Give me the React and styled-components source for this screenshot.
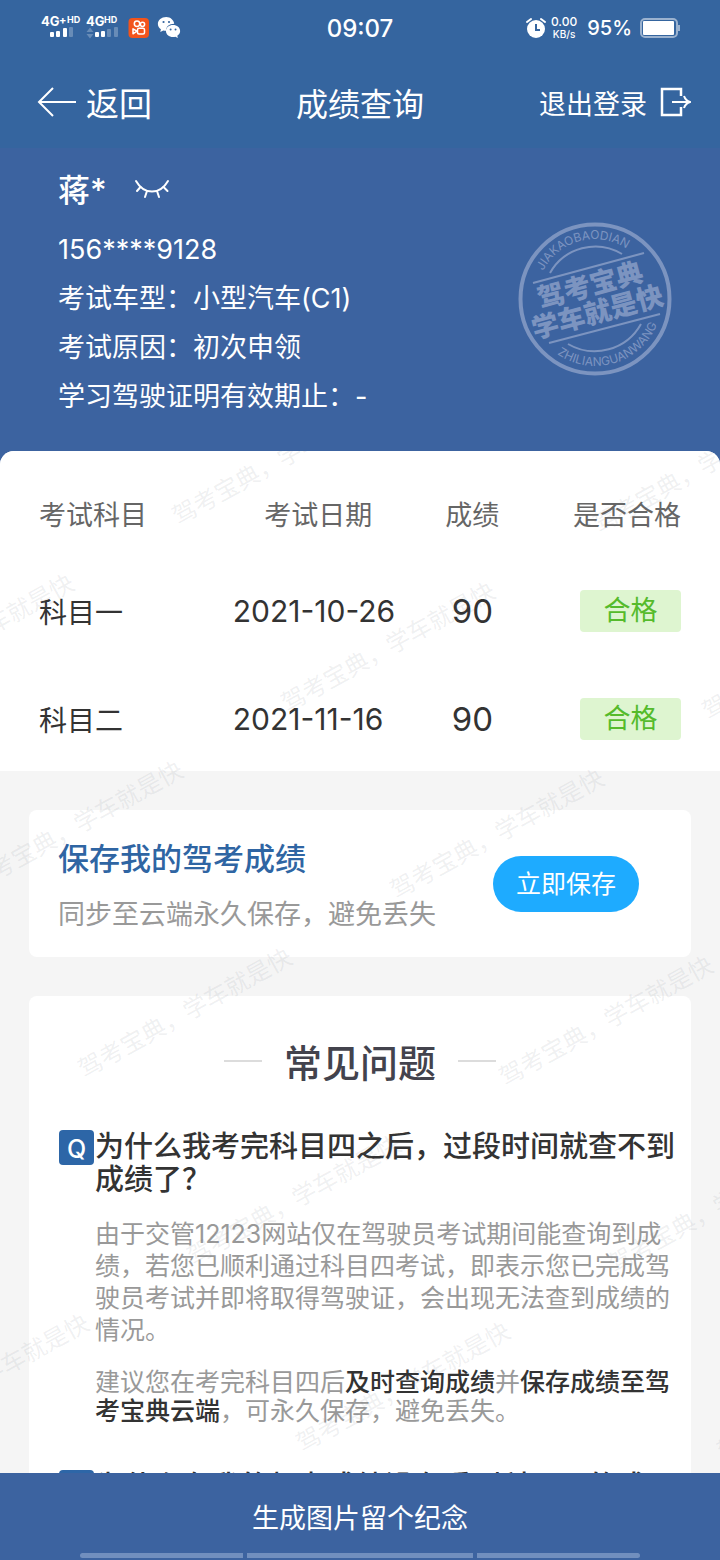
import React from "react";
import styled, { createGlobalStyle, css } from "styled-components";

const GlobalStyle = createGlobalStyle`
  * {
    box-sizing: border-box;
  }
  body {
    margin: 0;
    font-family: Inter, "Noto Sans CJK SC", sans-serif;
    font-size: 27px;
    color: #333;
  }
  button {
    font: inherit;
    border: 0;
    padding: 0;
    background: none;
    color: inherit;
    cursor: pointer;
  }
  h1, h2, h3, p {
    margin: 0;
  }
`;

const Page = styled.div`
  height: 100vh;
  display: flex;
  flex-direction: column;
  background: #f5f5f5;
`;

const Top = styled.header`
  background: #35659f;
  color: #fff;
`;

const StatusBar = styled.div`
  height: 56px;
  padding: 0 40px;
  display: grid;
  grid-template-columns: 1fr auto 1fr;
  align-items: center;
`;

const StatusGroup = styled.div`
  display: flex;
  align-items: center;
  justify-content: ${(props) => (props.$end ? "flex-end" : "flex-start")};
`;

const Clock = styled.div`
  font-size: 24px;
  font-weight: 500;
`;

const Speed = styled.div`
  margin: 0 10px 0 5px;
  font-size: 12px;
  line-height: 12px;
  font-weight: 500;
  text-align: center;
  small {
    display: block;
    font-size: 10px;
  }
`;

const Percent = styled.div`
  margin-right: 8px;
  font-size: 20px;
  font-weight: 500;
`;

const NavBar = styled.nav`
  height: 92px;
  padding: 0 29px;
  display: grid;
  grid-template-columns: 1fr auto 1fr;
  align-items: center;
`;

const NavTitle = styled.h1`
  font-size: 32px;
  font-weight: 400;
`;

const NavButton = styled.button`
  display: flex;
  align-items: center;
  gap: ${(props) => (props.$end ? "12px" : "9px")};
  padding-left: 8px;
  justify-self: ${(props) => (props.$end ? "end" : "start")};
  font-size: ${(props) => (props.$end ? "27px" : "33px")};
`;

const Scroll = styled.main`
  flex: 1;
  min-height: 0;
  overflow-y: auto;
  scrollbar-width: none;
  background: #3c63a0;
`;

const Profile = styled.section`
  height: 303px;
  padding: 17px 48px 0 58px;
  display: flex;
  justify-content: space-between;
  color: #fff;
`;

const NameRow = styled.div`
  height: 60px;
  display: flex;
  align-items: flex-start;
  gap: 27px;
  h2 {
    font-size: 32px;
    line-height: 52px;
    font-weight: 500;
  }
  button {
    display: flex;
    padding-top: 13px;
  }
`;

const Info = styled.p`
  line-height: 49px;
`;

const Seal = styled.svg`
  margin-top: 57px;
  flex: none;
`;

const Content = styled.div`
  position: relative;
  overflow: hidden;
  border-radius: 14px 14px 0 0;
  background: #f5f5f5;
`;

const Scores = styled.section`
  padding: 9px 39px 0;
  height: 320px;
  background: #fff;
`;

const ScoreTable = styled.table`
  width: 100%;
  border-collapse: collapse;
  table-layout: fixed;
`;

const cell = css`
  padding: 0;
  font-weight: 400;
  text-align: ${(props) => props.$align || "left"};
`;

const Th = styled.th`
  ${cell}
  height: 97px;
  padding-top: 10px;
  color: #666;
  width: ${(props) => props.$width};
`;

const Td = styled.td`
  ${cell}
  height: 108px;
  font-size: 28px;
`;

const DateTd = styled(Td)`
  padding-left: 14px;
  font-size: 30px;
`;

const ScoreTd = styled(Td)`
  font-size: 33px;
`;

const Pass = styled.span`
  display: inline-block;
  width: 101px;
  border-radius: 4px;
  background: #def5d0;
  color: #55bb2b;
  font-size: 27px;
  line-height: 42px;
  text-align: center;
`;

const Card = styled.section`
  margin: 39px 29px 0;
  border-radius: 8px;
  background: #fff;
`;

const SaveCard = styled(Card)`
  height: 147px;
  padding: 0 52px 0 29px;
  display: flex;
  align-items: center;
  justify-content: space-between;
`;

const SaveText = styled.div`
  padding-top: 5px;
  h2 {
    font-size: 31px;
    line-height: 46px;
    font-weight: 500;
    color: #2f65a3;
  }
  p {
    margin-top: 12px;
    line-height: 42px;
    color: #999;
  }
`;

const SaveButton = styled.button`
  width: 146px;
  border-radius: 28px;
  background: #1eabff;
  color: #fff;
  font-size: 25px;
  line-height: 56px;
`;

const FaqCard = styled(Card)`
  padding: 38px 16px 60px 30px;
`;

const FaqTitle = styled.h2`
  margin-right: 14px;
  margin-bottom: 38px;
  display: flex;
  align-items: center;
  justify-content: center;
  gap: 22px;
  font-size: 38px;
  line-height: 58px;
  font-weight: 500;
  color: #43434d;
  &::before,
  &::after {
    content: "";
    width: 38px;
    height: 2px;
    margin-top: -5px;
    background: #dcdcdc;
  }
`;

const FaqItem = styled.article`
  display: grid;
  grid-template-columns: 36px 1fr;
  margin-bottom: 44px;
`;

const Badge = styled.span`
  width: 35px;
  height: 35px;
  border-radius: 4px;
  background: #2d66a7;
  color: #fff;
  font-size: 25px;
  line-height: 38px;
  font-weight: 500;
  text-align: center;
`;

const Question = styled.h3`
  font-size: 29px;
  line-height: 33px;
  font-weight: 500;
`;

const Answer = styled.p`
  grid-column: 2;
  margin-top: 22px;
  font-size: 25px;
  line-height: ${(props) => (props.$tight ? "29px" : "32px")};
  color: #999;
  strong {
    font-weight: 500;
    color: #333;
  }
`;

const WatermarkLayer = styled.svg`
  position: absolute;
  inset: 0;
  width: 100%;
  height: 100%;
  pointer-events: none;
  font-size: 24px;
  fill: rgba(100, 110, 120, 0.1);
`;

const Footer = styled.footer`
  height: 87px;
  display: flex;
  flex-direction: column;
  align-items: center;
  background: #3c63a0;
  color: #fff;
`;

const ShareButton = styled.button`
  width: 100%;
  padding-top: 12px;
  line-height: 68px;
`;

const GestureBar = styled.div`
  width: 560px;
  max-width: 80%;
  display: grid;
  grid-template-columns: 163fr 226fr 163fr;
  gap: 4px;
  span {
    height: 5px;
    background: #718fbe;
  }
  span:first-child {
    border-radius: 3px 0 0 3px;
  }
  span:last-child {
    border-radius: 0 3px 3px 0;
  }
`;

const SignalIcon = () => (
  <svg width="117" height="28" viewBox="0 0 117 28" fill="#fff">
    <g fontFamily="Inter" fontWeight="700">
      <text x="1" y="12" fontSize="13">4G</text>
      <text x="19" y="10" fontSize="11">+</text>
      <text x="27" y="9" fontSize="9">HD</text>
      <text x="46" y="12" fontSize="13">4G</text>
      <text x="64" y="9" fontSize="9">HD</text>
    </g>
    <rect x="10" y="18" width="4" height="5" rx="1" />
    <rect x="16" y="17" width="4" height="6" rx="1" />
    <rect x="23" y="14" width="4" height="9" rx="1" />
    <rect x="55" y="18" width="4" height="5" rx="1" />
    <rect x="61" y="17" width="4" height="6" rx="1" />
    <g opacity="0.25">
      <rect x="29" y="13" width="4" height="10" rx="1" />
      <rect x="67" y="15" width="4" height="8" rx="1" />
      <rect x="74" y="13" width="4" height="10" rx="1" />
      <path d="M46.500 18l3.500-4.500 3.500 4.500zM46.500 20l3.500 4.500 3.500-4.500z" />
    </g>
    <rect x="88.500" y="4" width="20.500" height="20" rx="4" fill="#f2541b" />
    <g fill="none" stroke="#fff" strokeWidth="1.500" strokeLinejoin="round">
      <circle cx="97" cy="9.800" r="2.700" />
      <circle cx="102.500" cy="10.300" r="2.100" />
      <rect x="97.500" y="14.300" width="7" height="5.800" rx="1.500" />
      <path d="M97 17.200l-4-2.400v5z" />
    </g>
  </svg>
);

const WechatIcon = () => (
  <svg width="24" height="24" viewBox="0 0 22 22">
    <path
      fill="#fff"
      d="M8.500 1C4.100 1 .8 3.700.8 7.300c0 2 1.100 3.700 2.800 4.900L3 14.700l2.800-1.400c.9.200 1.800.4 2.700.3C8 9.800 11 7.300 15.800 7.200 15.200 3.600 12.300 1 8.500 1z"
    />
    <path
      fill="#fff"
      d="M14.700 8.300c-3.700 0-6.500 2.400-6.500 5.500s2.800 5.500 6.500 5.500c.8 0 1.500-.1 2.200-.3l2.200 1.200-.5-2c1.600-1 2.600-2.600 2.600-4.400 0-3.100-2.900-5.500-6.500-5.500z"
    />
    <g fill="#35659f">
      <circle cx="6" cy="5.500" r="1" />
      <circle cx="11" cy="5.500" r="1" />
      <circle cx="12.500" cy="12.300" r="0.900" />
      <circle cx="17" cy="12.300" r="0.900" />
    </g>
  </svg>
);

const AlarmIcon = () => (
  <svg width="20" height="22" viewBox="0 0 20 22">
    <circle cx="10" cy="12" r="9" fill="#fff" />
    <path d="M1 5l4-3M19 5l-4-3" stroke="#fff" strokeWidth="2" strokeLinecap="round" />
    <path d="M10 7v6h4" fill="none" stroke="#35659f" strokeWidth="2" />
  </svg>
);

const BatteryIcon = () => (
  <svg width="40" height="20" viewBox="0 0 40 20">
    <rect x="1" y="1" width="36" height="18" rx="4" fill="none" stroke="#9bb2cf" strokeWidth="2" />
    <rect x="3" y="3" width="31" height="14" rx="1" fill="#fff" />
    <path d="M39 7v6" stroke="#9bb2cf" strokeWidth="2" />
  </svg>
);

const BackIcon = () => (
  <svg width="40" height="30" viewBox="0 0 40 30" fill="none" stroke="#fff" strokeWidth="2">
    <path d="M39 15H2M16 1L2 15l14 14" />
  </svg>
);

const LogoutIcon = () => (
  <svg width="32" height="30" viewBox="0 0 32 30" fill="none" stroke="#fff" strokeWidth="2.500">
    <path d="M22 9V2H3v26h19v-8" />
    <path d="M13 15h17M25 9c1 3 3 5 6 6-3 1-5 3-6 6" strokeWidth="2" />
  </svg>
);

const ClosedEyeIcon = () => (
  <svg width="36" height="22" viewBox="0 0 36 22" fill="none" stroke="#fff" strokeWidth="2" strokeLinecap="round">
    <path d="M2 3c4 7 9.500 10.500 16 10.500S30 10 34 3" />
    <path d="M6.500 9L3 13M13 13l-2 6M23 13l2 6M29.500 9l4 4" />
  </svg>
);

const SealMark = () => (
  <Seal width="154" height="154" viewBox="0 0 154 154" fill="none" stroke="#7c94c0">
    <defs>
      <path id="seal-top" d="M25 49A58 58 0 0 1 134 66" />
      <path id="seal-bottom" d="M39 132A67 67 0 0 0 144 81" />
    </defs>
    <circle cx="77" cy="77" r="74.500" strokeWidth="4" />
    <g strokeWidth="2">
      <path d="M32 51A52 52 0 0 1 104 32" />
      <path d="M50 122A53 53 0 0 0 123 102" />
      <path d="M15 61L126 31" />
      <path d="M31 121L142 92" />
    </g>
    <g fill="#7c94c0" stroke="none" fontSize="12">
      <text>
        <textPath href="#seal-top">JIAKAOBAODIAN</textPath>
      </text>
      <text>
        <textPath href="#seal-bottom">ZHILIANGUANWANG</textPath>
      </text>
    </g>
    <g
      fill="#7c94c0"
      stroke="none"
      fontWeight="900"
      fontSize="27"
      textAnchor="middle"
      transform="rotate(-15 77 77)"
    >
      <text x="76" y="72">驾考宝典</text>
      <text x="76" y="100">学车就是快</text>
    </g>
  </Seal>
);

// only the marks whose centre falls on or just beside the page
const MARKS = [-1, 0, 1, 2, 3, 4, 5, 6]
  .flatMap((row) =>
    [-2, -1, 0, 1].map((col) => ({
      x: 279 + row * 109 + col * 421,
      y: 9 + row * 187 + col * 8,
    }))
  )
  .filter(({ x, y }) => x > -90 && x < 830 && y > 0 && y < 1020);

const Watermark = () => (
  <WatermarkLayer aria-hidden="true">
    {MARKS.map(({ x, y }) => (
      <text
        key={`${x}:${y}`}
        textAnchor="middle"
        dominantBaseline="central"
        transform={`translate(${x} ${y}) rotate(-29)`}
      >
        驾考宝典，学车就是快
      </text>
    ))}
  </WatermarkLayer>
);

const scores = [
  { subject: "科目一", date: "2021-10-26", score: 90, result: "合格" },
  { subject: "科目二", date: "2021-11-16", score: 90, result: "合格" },
];

const App = () => {
  return (
    <>
      <GlobalStyle />
      <Page lang="zh-CN">
        <Top>
          <StatusBar>
            <StatusGroup>
              <SignalIcon />
              <WechatIcon />
            </StatusGroup>
            <Clock>09:07</Clock>
            <StatusGroup $end>
              <AlarmIcon />
              <Speed>
                0.00<small>KB/s</small>
              </Speed>
              <Percent>95%</Percent>
              <BatteryIcon />
            </StatusGroup>
          </StatusBar>
          <NavBar>
            <NavButton type="button">
              <BackIcon />
              返回
            </NavButton>
            <NavTitle>成绩查询</NavTitle>
            <NavButton type="button" $end>
              退出登录
              <LogoutIcon />
            </NavButton>
          </NavBar>
        </Top>
        <Scroll>
          <Profile>
            <div>
              <NameRow>
                <h2>蒋*</h2>
                <button type="button" aria-label="显示姓名">
                  <ClosedEyeIcon />
                </button>
              </NameRow>
              <Info>156****9128</Info>
              <Info>考试车型：小型汽车(C1)</Info>
              <Info>考试原因：初次申领</Info>
              <Info>学习驾驶证明有效期止：-</Info>
            </div>
            <SealMark />
          </Profile>
          <Content>
            <Scores>
              <ScoreTable>
                <thead>
                  <tr>
                    <Th $width="28%">考试科目</Th>
                    <Th $width="31%" $align="center">考试日期</Th>
                    <Th $width="17%" $align="center">成绩</Th>
                    <Th $width="24%" $align="right">是否合格</Th>
                  </tr>
                </thead>
                <tbody>
                  {scores.map((item) => (
                    <tr key={item.subject}>
                      <Td>{item.subject}</Td>
                      <DateTd>{item.date}</DateTd>
                      <ScoreTd $align="center">{item.score}</ScoreTd>
                      <Td $align="right">
                        <Pass>{item.result}</Pass>
                      </Td>
                    </tr>
                  ))}
                </tbody>
              </ScoreTable>
            </Scores>
            <SaveCard>
              <SaveText>
                <h2>保存我的驾考成绩</h2>
                <p>同步至云端永久保存，避免丢失</p>
              </SaveText>
              <SaveButton type="button">立即保存</SaveButton>
            </SaveCard>
            <FaqCard>
              <FaqTitle>常见问题</FaqTitle>
              <FaqItem>
                <Badge>Q</Badge>
                <Question>为什么我考完科目四之后，过段时间就查不到成绩了？</Question>
                <Answer>
                  由于交管12123网站仅在驾驶员考试期间能查询到成绩，若您已顺利通过科目四考试，即表示您已完成驾驶员考试并即将取得驾驶证，会出现无法查到成绩的情况。
                </Answer>
                <Answer $tight>
                  建议您在考完科目四后<strong>及时查询成绩</strong>并<strong>保存成绩至驾考宝典云端</strong>，可永久保存，避免丢失。
                </Answer>
              </FaqItem>
              <FaqItem>
                <Badge>Q</Badge>
                <Question>为什么在我的驾考成绩没有看到科目三的成绩？</Question>
              </FaqItem>
            </FaqCard>
            <Watermark />
          </Content>
        </Scroll>
        <Footer>
          <ShareButton type="button">生成图片留个纪念</ShareButton>
          <GestureBar>
            <span />
            <span />
            <span />
          </GestureBar>
        </Footer>
      </Page>
    </>
  );
};

export default App;
